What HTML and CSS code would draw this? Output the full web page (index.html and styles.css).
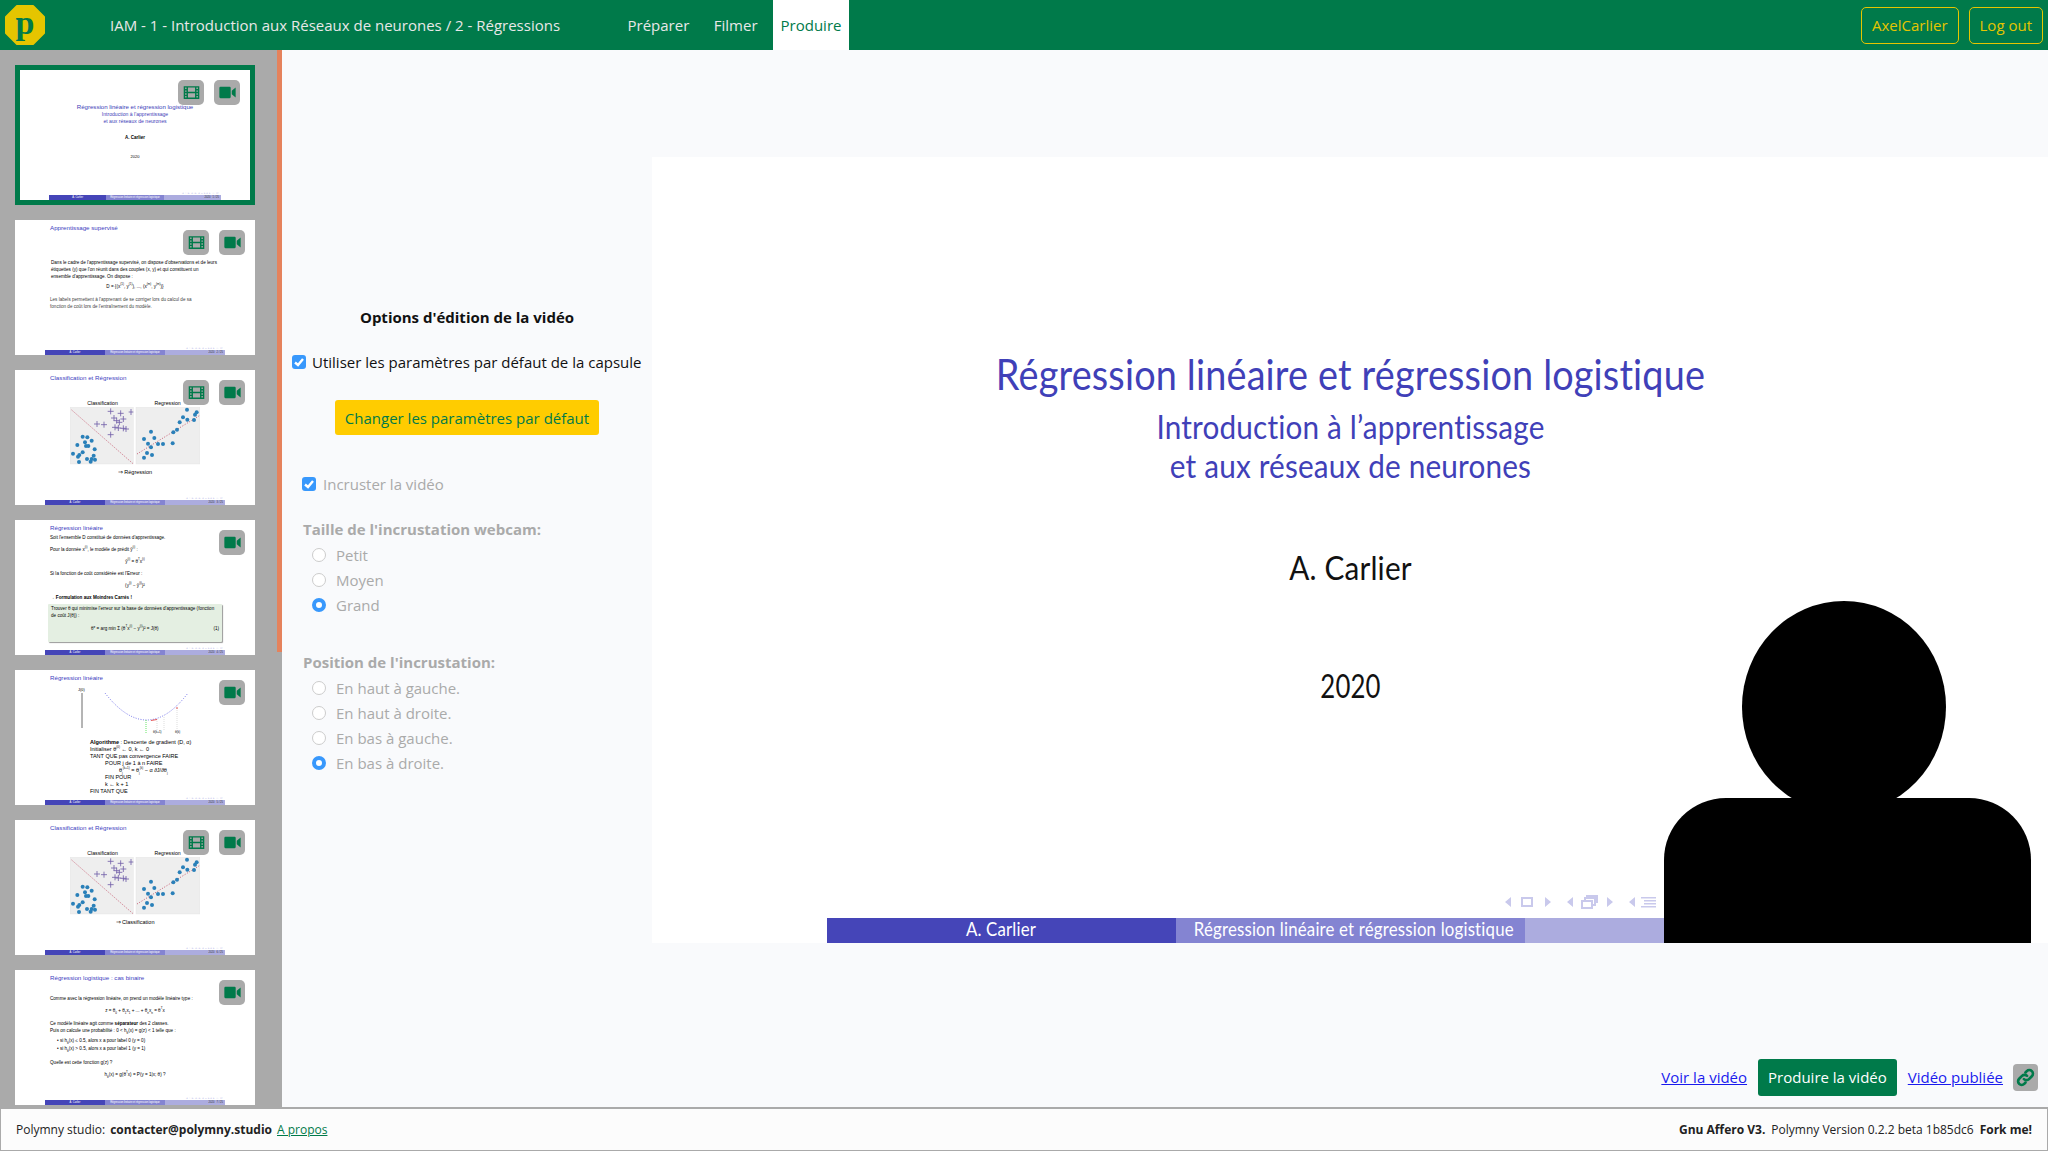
FILE: index.html
```html
<!DOCTYPE html>
<html>
<head>
    <meta charset="utf-8">
    <link rel="stylesheet" href="styles.css">
</head>
<body>
    <svg class="defs" width="0" height="0">
        <symbol id="film" viewBox="0 0 24 24">
            <path fill="currentColor" fill-rule="evenodd" d="M1 3h22v18H1zM3 5v2h2V5zM3 9v2h2V9zM3 13v2h2v-2zM3 17v2h2v-2zM19 5v2h2V5zM19 9v2h2V9zM19 13v2h2v-2zM19 17v2h2v-2zM7 5v6h10V5zM7 13v6h10v-6z"/>
        </symbol>
        <symbol id="camera" viewBox="0 0 24 24">
            <path fill="currentColor" d="M2 4h13a1.500 1.500 0 0 1 1.500 1.500v13A1.500 1.500 0 0 1 15 20H2a1.500 1.500 0 0 1-1.500-1.500v-13A1.500 1.500 0 0 1 2 4zM18 9.500 23.500 5v14L18 14.500z"/>
        </symbol>
        <symbol id="scatter" viewBox="0 0 390 172">
            <rect x="0" y="0" width="190" height="170" fill="#eee" stroke="#ddd"/>
            <rect x="198" y="0" width="192" height="170" fill="#eee" stroke="#ddd"/>
            <path d="M5 8 188 168M201 140 388 25" stroke="#b01030" stroke-width="2" stroke-dasharray="3 5" fill="none"/>
            <g fill="#2a80b9">
                <circle cx="38" cy="88" r="6"/><circle cx="52" cy="90" r="6"/><circle cx="65" cy="100" r="6"/>
                <circle cx="45" cy="105" r="6"/><circle cx="48" cy="116" r="6"/><circle cx="55" cy="116" r="6"/>
                <circle cx="22" cy="113" r="6"/><circle cx="74" cy="126" r="6"/><circle cx="38" cy="135" r="6"/>
                <circle cx="28" cy="143" r="6"/><circle cx="9" cy="139" r="6"/><circle cx="24" cy="148" r="6"/>
                <circle cx="71" cy="145" r="6"/><circle cx="51" cy="155" r="6"/><circle cx="65" cy="155" r="6"/>
                <circle cx="75" cy="157" r="6"/><circle cx="62" cy="163" r="6"/><circle cx="27" cy="164" r="6"/>
                <circle cx="351" cy="7" r="6"/><circle cx="380" cy="15" r="6"/><circle cx="375" cy="22" r="6"/>
                <circle cx="339" cy="30" r="6"/><circle cx="352" cy="37" r="6"/><circle cx="372" cy="38" r="6"/>
                <circle cx="329" cy="45" r="6"/><circle cx="321" cy="67" r="6"/><circle cx="310" cy="75" r="6"/>
                <circle cx="243" cy="73" r="6"/><circle cx="253" cy="92" r="6"/><circle cx="222" cy="95" r="6"/>
                <circle cx="234" cy="109" r="6"/><circle cx="264" cy="110" r="6"/><circle cx="279" cy="110" r="6"/>
                <circle cx="308" cy="108" r="6"/><circle cx="243" cy="120" r="6"/><circle cx="231" cy="137" r="6"/>
                <circle cx="246" cy="143" r="6"/><circle cx="222" cy="151" r="6"/>
            </g>
            <path stroke="#7260a8" stroke-width="2.500" fill="none" d="M113 12h18M122 3v18M143 18h18M152 9v18M176 14h14M183 5v18M123 32h18M132 23v18M151 35h18M160 26v18M131 40h18M140 31v18M139 45h18M148 36v18M72 50h18M81 41v18M93 52h18M102 43v18M126 60h18M135 51v18M136 62h18M145 53v18M151 63h18M160 54v18M159 65h18M168 56v18M113 82h18M122 73v18"/>
        </symbol>
    </svg>

    <header class="topbar">
        <svg class="logo" viewBox="0 0 40 40">
            <polygon points="12,1 28,1 39,12 39,28 28,39 12,39 1,28 1,12" fill="#e5c500" stroke="#e5c500" stroke-width="2" stroke-linejoin="round"/>
            <text x="20" y="29" text-anchor="middle" class="logo-letter">p</text>
        </svg>
        <span class="capsule-title">IAM - 1 - Introduction aux Réseaux de neurones / 2 - Régressions</span>
        <nav class="tabs">
            <a class="tab">Préparer</a>
            <a class="tab">Filmer</a>
            <a class="tab active">Produire</a>
        </nav>
        <div class="user-btns">
            <a class="outline-btn">AxelCarlier</a>
            <a class="outline-btn">Log out</a>
        </div>
    </header>

    <div class="workspace">
        <aside class="sidebar">
            <div class="thumbs">

                <div class="thumb selected">
                    <div class="badges">
                        <span class="badge"><svg><use href="#film"/></svg></span>
                        <span class="badge"><svg><use href="#camera"/></svg></span>
                    </div>
                    <div class="mini mini-title-slide">
                        <div class="mt-main">Régression linéaire et régression logistique</div>
                        <div class="mt-sub">Introduction à l'apprentissage<br>et aux réseaux de neurones</div>
                        <div class="mt-author">A. Carlier</div>
                        <div class="mt-year">2020</div>
                        <div class="mini-nav">◂ □ ▸ ◂ ▫ ▸ ◂ ≡ ▸ ◂ ▸ ∽ ∅</div>
                        <div class="mini-bar"><span>A. Carlier</span><span>Régression linéaire et régression logistique</span><span>2020 &nbsp; 1 / 25</span></div>
                    </div>
                </div>

                <div class="thumb">
                    <div class="badges">
                        <span class="badge"><svg><use href="#film"/></svg></span>
                        <span class="badge"><svg><use href="#camera"/></svg></span>
                    </div>
                    <div class="mini">
                        <div class="mini-head">Apprentissage supervisé</div>
                        <p class="mp push">Dans le cadre de l'apprentissage supervisé, on dispose d'observations et de leurs étiquettes (y) que l'on réunit dans des couples (x, y) et qui constituent un ensemble d'apprentissage. On dispose :</p>
                        <p class="mc">D = {(x<sup>(1)</sup>, y<sup>(1)</sup>), ..., (x<sup>(m)</sup>, y<sup>(m)</sup>)}</p>
                        <p class="mp light">Les labels permettent à l'apprenant de se corriger lors du calcul de sa fonction de coût lors de l'entraînement du modèle.</p>
                        <div class="mini-nav">◂ □ ▸ ◂ ▫ ▸ ◂ ≡ ▸ ◂ ▸ ∽ ∅</div>
                        <div class="mini-bar"><span>A. Carlier</span><span>Régression linéaire et régression logistique</span><span>2020 &nbsp; 2 / 25</span></div>
                    </div>
                </div>

                <div class="thumb">
                    <div class="badges">
                        <span class="badge"><svg><use href="#film"/></svg></span>
                        <span class="badge"><svg><use href="#camera"/></svg></span>
                    </div>
                    <div class="mini">
                        <div class="mini-head">Classification et Régression</div>
                        <div class="plot-labels"><span>Classification</span><span>Regression</span></div>
                        <svg class="plot"><use href="#scatter"/></svg>
                        <p class="mc caption">⇒ Régression</p>
                        <div class="mini-nav">◂ □ ▸ ◂ ▫ ▸ ◂ ≡ ▸ ◂ ▸ ∽ ∅</div>
                        <div class="mini-bar"><span>A. Carlier</span><span>Régression linéaire et régression logistique</span><span>2020 &nbsp; 3 / 25</span></div>
                    </div>
                </div>

                <div class="thumb">
                    <div class="badges">
                        <span class="badge"><svg><use href="#camera"/></svg></span>
                    </div>
                    <div class="mini">
                        <div class="mini-head">Régression linéaire</div>
                        <p class="mp first">Soit l'ensemble D constitué de données d'apprentissage.</p>
                        <p class="mp">Pour la donnée x<sup>(i)</sup>, le modèle de prédit ŷ<sup>(i)</sup> :</p>
                        <p class="mc">ŷ<sup>(i)</sup> = θ<sup>T</sup>x<sup>(i)</sup></p>
                        <p class="mp">Si la fonction de coût considérée est l'Erreur :</p>
                        <p class="mc">(y<sup>(i)</sup> − ŷ<sup>(i)</sup>)²</p>
                        <p class="mp last"><b>→ Formulation aux Moindres Carrés !</b></p>
                        <div class="mini-block">
                            Trouver θ qui minimise l'erreur sur la base de données d'apprentissage (fonction de coût J(θ)) :
                            <div class="formula"><span>θ* = arg min Σ (θ<sup>T</sup>x<sup>(i)</sup> − y<sup>(i)</sup>)² = J(θ)</span><span>(1)</span></div>
                        </div>
                        <div class="mini-nav">◂ □ ▸ ◂ ▫ ▸ ◂ ≡ ▸ ◂ ▸ ∽ ∅</div>
                        <div class="mini-bar"><span>A. Carlier</span><span>Régression linéaire et régression logistique</span><span>2020 &nbsp; 4 / 25</span></div>
                    </div>
                </div>

                <div class="thumb">
                    <div class="badges">
                        <span class="badge"><svg><use href="#camera"/></svg></span>
                    </div>
                    <div class="mini">
                        <div class="mini-head">Régression linéaire</div>
                        <svg class="curve" viewBox="0 0 150 50">
                            <text x="33" y="7" class="curve-label">J(θ)</text>
                            <path d="M37 9V44" stroke="#444" stroke-width="0.800"/>
                            <path d="M60 9Q102 63 143 9" stroke="#3a3ae0" stroke-width="0.700" stroke-dasharray="1 1.500" fill="none"/>
                            <path d="M112 35V46M119 33V46M132 24V46" stroke="#bbb" stroke-width="0.500" stroke-dasharray="1 1"/>
                            <path d="M101 36V50" stroke="#40e040" stroke-width="0.800" stroke-dasharray="1 1"/>
                            <path d="M106 36.500 112 35.500M132 23V25" stroke="#e03030" stroke-width="0.800"/>
                            <text x="108" y="49" class="curve-label small">θ(k+1)</text>
                            <text x="130" y="49" class="curve-label small">θ(k)</text>
                        </svg>
                        <div class="algo">
                            <b>Algorithme</b> : Descente de gradient (D, α)<br>
                            Initialiser θ<sup>(0)</sup> ← 0, k ← 0<br>
                            TANT QUE pas convergence FAIRE<br>
                            <span class="indent">POUR j de 1 à n FAIRE</span><br>
                            <span class="indent2">θ<sub>j</sub><sup>(k+1)</sup> = θ<sub>j</sub><sup>(k)</sup> − α ∂J/∂θ<sub>j</sub></span><br>
                            <span class="indent">FIN POUR</span><br>
                            <span class="indent">k ← k + 1</span><br>
                            FIN TANT QUE
                        </div>
                        <div class="mini-nav">◂ □ ▸ ◂ ▫ ▸ ◂ ≡ ▸ ◂ ▸ ∽ ∅</div>
                        <div class="mini-bar"><span>A. Carlier</span><span>Régression linéaire et régression logistique</span><span>2020 &nbsp; 5 / 25</span></div>
                    </div>
                </div>

                <div class="thumb">
                    <div class="badges">
                        <span class="badge"><svg><use href="#film"/></svg></span>
                        <span class="badge"><svg><use href="#camera"/></svg></span>
                    </div>
                    <div class="mini">
                        <div class="mini-head">Classification et Régression</div>
                        <div class="plot-labels"><span>Classification</span><span>Regression</span></div>
                        <svg class="plot"><use href="#scatter"/></svg>
                        <p class="mc caption">⇒ Classification</p>
                        <div class="mini-nav">◂ □ ▸ ◂ ▫ ▸ ◂ ≡ ▸ ◂ ▸ ∽ ∅</div>
                        <div class="mini-bar"><span>A. Carlier</span><span>Régression linéaire et régression logistique</span><span>2020 &nbsp; 6 / 25</span></div>
                    </div>
                </div>

                <div class="thumb">
                    <div class="badges">
                        <span class="badge"><svg><use href="#camera"/></svg></span>
                    </div>
                    <div class="mini">
                        <div class="mini-head">Régression logistique : cas binaire</div>
                        <p class="mp push-sm">Comme avec la régression linéaire, on prend un modèle linéaire type :</p>
                        <p class="mc">z = θ<sub>0</sub> + θ<sub>1</sub>x<sub>1</sub> + ... + θ<sub>n</sub>x<sub>n</sub> = θ<sup>T</sup>x</p>
                        <p class="mp tight">Ce modèle linéaire agit comme <b>séparateur</b> des 2 classes.<br>Puis on calcule une probabilité : 0 &lt; h<sub>θ</sub>(x) = g(z) &lt; 1 telle que :</p>
                        <p class="mp bullets">• si h<sub>θ</sub>(x) ≤ 0.5, alors x a pour label 0 (y = 0)<br>• si h<sub>θ</sub>(x) &gt; 0.5, alors x a pour label 1 (y = 1)</p>
                        <p class="mp">Quelle est cette fonction g(z) ?</p>
                        <p class="mc">h<sub>θ</sub>(x) = g(θ<sup>T</sup>x) = P(y = 1|x; θ) ?</p>
                        <div class="mini-nav">◂ □ ▸ ◂ ▫ ▸ ◂ ≡ ▸ ◂ ▸ ∽ ∅</div>
                        <div class="mini-bar"><span>A. Carlier</span><span>Régression linéaire et régression logistique</span><span>2020 &nbsp; 7 / 25</span></div>
                    </div>
                </div>

            </div>
            <div class="scrolltrack"><div class="scrollthumb"></div></div>
        </aside>

        <main class="main">
            <section class="options">
                <h4 class="options-title">Options d'édition de la vidéo</h4>
                <div class="check-row">
                    <span class="check"><svg viewBox="0 0 14 14"><path d="M3 7.500 6 10l5-6" fill="none" stroke="#fff" stroke-width="2.400"/></svg></span>
                    <span>Utiliser les paramètres par défaut de la capsule</span>
                </div>
                <a class="yellow-btn">Changer les paramètres par défaut</a>
                <div class="disabled-group">
                    <div class="check-row inner">
                        <span class="check"><svg viewBox="0 0 14 14"><path d="M3 7.500 6 10l5-6" fill="none" stroke="#fff" stroke-width="2.400"/></svg></span>
                        <span>Incruster la vidéo</span>
                    </div>
                    <div class="group-label">Taille de l'incrustation webcam:</div>
                    <div class="radio-row"><span class="radio"></span>Petit</div>
                    <div class="radio-row"><span class="radio"></span>Moyen</div>
                    <div class="radio-row"><span class="radio on"></span>Grand</div>
                    <div class="group-label second">Position de l'incrustation:</div>
                    <div class="radio-row"><span class="radio"></span>En haut à gauche.</div>
                    <div class="radio-row"><span class="radio"></span>En haut à droite.</div>
                    <div class="radio-row"><span class="radio"></span>En bas à gauche.</div>
                    <div class="radio-row"><span class="radio on"></span>En bas à droite.</div>
                </div>
            </section>

            <section class="stage">
                <div class="slide-wrap">
                    <div class="slide">
                        <div class="beamer">
                            <div class="s-title">Régression linéaire et régression logistique</div>
                            <div class="s-sub">Introduction à l’apprentissage<br>et aux réseaux de neurones</div>
                            <div class="s-author">A. Carlier</div>
                            <div class="s-year">2020</div>
                            <svg class="s-nav" viewBox="0 0 154 14">
                                <g fill="#c9c9ec">
                                    <path d="M0 7 6 2v10zM40 2v10l6-5zM62 7l6-5v10zM102 2v10l6-5zM124 7l6-5v10z"/>
                                    <path d="M136 2h15v1.500h-15zM139 5h12v1.500h-12zM139 8h12v1.500h-12zM136 11h15v1.500h-15z"/>
                                </g>
                                <g fill="none" stroke="#c9c9ec" stroke-width="2">
                                    <rect x="17" y="3" width="10" height="8"/>
                                    <path d="M77 6h10v7H77zM80 6V3h10v7h-3M82 3V1h10v6h-2"/>
                                </g>
                            </svg>
                            <div class="s-bar">
                                <span><span class="squeeze">A. Carlier</span></span>
                                <span><span class="squeeze">Régression linéaire et régression logistique</span></span>
                                <span></span>
                            </div>
                        </div>
                        <div class="webcam">
                            <div class="head"></div>
                            <div class="shoulders"></div>
                        </div>
                    </div>
                </div>
                <div class="actions">
                    <a class="link">Voir la vidéo</a>
                    <a class="green-btn">Produire la vidéo</a>
                    <a class="link">Vidéo publiée</a>
                    <a class="copy-btn">
                        <svg viewBox="0 0 24 24" fill="none" stroke="#007a4a" stroke-width="3.400" stroke-linecap="round"><path d="M10 14a4.500 4.500 0 0 0 6.400 0l3.600-3.600A4.500 4.500 0 0 0 13.600 4L12 5.600"/><path d="M14 10a4.500 4.500 0 0 0-6.400 0L4 13.600A4.500 4.500 0 0 0 10.400 20L12 18.400"/></svg>
                    </a>
                </div>
            </section>
        </main>
    </div>

    <footer class="footer">
        <div class="foot-left">
            <span>Polymny studio:</span>
            <b>contacter@polymny.studio</b>
            <a class="about">A propos</a>
        </div>
        <div class="foot-right">
            <b>Gnu Affero V3.</b>
            <span>Polymny Version 0.2.2 beta 1b85dc6</span>
            <b>Fork me!</b>
        </div>
    </footer>
</body>
</html>
```
FILE: styles.css
```css
*
{
    box-sizing: border-box;
}
html, body
{
    height: 100%;
}
body
{
    margin: 0;
    display: flex;
    flex-direction: column;
    overflow: hidden;
    font-family: "Open Sans", sans-serif;
    font-size: 15px;
    color: #111;
    background-color: #f9fafc;
}
.defs
{
    position: absolute;
}

/* top bar */
.topbar
{
    height: 50px;
    flex: none;
    display: flex;
    align-items: center;
    padding-left: 5px;
    background-color: #007a4a;
    color: #e8e8e8;
}
.logo
{
    width: 40px;
    height: 40px;
    flex: none;
}
.logo-letter
{
    font-family: "Liberation Serif", serif;
    font-weight: bold;
    font-size: 34px;
    fill: #007a4a;
}
.capsule-title
{
    margin-left: 65px;
    width: 510px;
    white-space: nowrap;
}
.tabs
{
    display: flex;
    height: 50px;
}
.tab
{
    display: flex;
    align-items: center;
    padding: 0 7.500px;
    margin-right: 9.500px;
}
.tab.active
{
    margin-right: 0;
    margin-left: -1.500px;
    background-color: #fff;
    color: #007a4a;
}
.user-btns
{
    margin-left: auto;
    margin-right: 5px;
    display: flex;
    gap: 10px;
}
.outline-btn
{
    height: 37px;
    padding: 0 10px;
    display: flex;
    align-items: center;
    border: 1px solid #e5c500;
    border-radius: 5px;
    color: #e5c500;
}

/* layout */
.workspace
{
    flex: 1;
    min-height: 0;
    display: flex;
}
.sidebar
{
    width: 282px;
    flex: none;
    display: flex;
    background-color: #aaa;
    overflow: hidden;
}
.thumbs
{
    width: 277px;
    padding: 15px 0 0 15px;
    display: flex;
    flex-direction: column;
    gap: 15px;
}
.scrolltrack
{
    width: 5px;
}
.scrollthumb
{
    height: 602px;
    background-color: #e5825c;
}

/* thumbnails */
.thumb
{
    position: relative;
    width: 240px;
    height: 135px;
    flex: none;
    background-color: #fff;
    display: flex;
    justify-content: center;
}
.thumb.selected
{
    height: 140px;
    border: 5px solid #007a4a;
}
.badges
{
    position: absolute;
    top: 10px;
    right: 10px;
    display: flex;
    gap: 10px;
}
.badge
{
    width: 26px;
    height: 25px;
    border-radius: 5px;
    background-color: #aaa;
    color: #007a4a;
    display: flex;
    align-items: center;
    justify-content: center;
}
.badge svg
{
    width: 17px;
    height: 17px;
}
.mini
{
    width: 180px;
    height: 100%;
    display: flex;
    flex-direction: column;
    font-family: "Liberation Sans", sans-serif;
    font-size: 4.600px;
    line-height: 5.500px;
    color: #000;
}
.mini sup, .mini sub
{
    font-size: 3px;
    line-height: 0;
}
.mini-head
{
    margin: 4px 0 0 5px;
    font-size: 6.200px;
    line-height: 7px;
    color: #4040c0;
}
.mp
{
    margin: 0 5px 6.500px;
    white-space: normal;
}
.mp.first
{
    margin-top: 4px;
}
.mp.last
{
    margin-bottom: 3px;
}
.mp.push
{
    margin: 27.500px 8px 4.500px 6px;
    line-height: 7px;
}
.mp.push-sm
{
    margin-top: 15px;
}
.mp.light
{
    color: #444;
    line-height: 7px;
    margin-right: 30px;
}
.mp.tight
{
    line-height: 7px;
    margin-bottom: 2.500px;
}
.mp.bullets
{
    margin: 0 5px 7px 12px;
    line-height: 8px;
}
.mc
{
    margin: 0 0 6.500px;
    text-align: center;
}
.caption
{
    margin-top: 5px;
    font-size: 5.500px;
}
.plot-labels
{
    margin: 20px 0 0 24px;
    width: 130px;
    display: flex;
    justify-content: space-around;
    font-size: 5.200px;
}
.plot
{
    width: 130px;
    height: 58px;
    flex: none;
    margin-left: 25px;
}
.mini-block
{
    margin-left: 3px;
    padding: 1px 3px;
    height: 38px;
    width: 174px;
    flex: none;
    border-radius: 1px;
    background-color: #e4efe2;
    box-shadow: 1px 1px 1px #999;
    line-height: 7px;
}
.formula
{
    margin-top: 6px;
    padding-left: 40px;
    display: flex;
    justify-content: space-between;
}
.curve
{
    width: 150px;
    height: 50px;
    flex: none;
    margin-top: 3px;
}
.curve-label
{
    font-size: 4px;
}
.curve-label.small
{
    font-size: 3px;
}
.algo
{
    margin: 5px 0 0 45px;
    font-size: 5.500px;
    line-height: 7px;
    white-space: nowrap;
}
.indent
{
    margin-left: 15px;
}
.indent2
{
    margin-left: 29px;
}
.mini-nav
{
    margin-top: auto;
    text-align: right;
    padding-right: 2px;
    color: #c9c9ec;
    font-size: 3px;
    line-height: 4px;
    white-space: nowrap;
}
.mini-bar
{
    height: 5px;
    flex: none;
    display: grid;
    grid-template-columns: repeat(3, minmax(0, 1fr));
    text-align: center;
    color: #fff;
    font-size: 2.600px;
    line-height: 5px;
    white-space: nowrap;
    overflow: hidden;
}
.mini-bar span:nth-child(1)
{
    background-color: #4545b8;
}
.mini-bar span:nth-child(2)
{
    background-color: #8484d2;
}
.mini-bar span:nth-child(3)
{
    background-color: #acacdf;
    color: #333;
    text-align: right;
    padding-right: 2px;
}
.mini-title-slide
{
    width: 172px;
    text-align: center;
}
.mt-main
{
    margin-top: 32.500px;
    font-size: 6.100px;
    line-height: 7px;
    color: #4040b8;
}
.mt-sub
{
    margin-top: 1px;
    font-size: 5.100px;
    line-height: 7px;
    color: #4040b8;
}
.mt-author
{
    margin-top: 10.500px;
    font-size: 4.500px;
    line-height: 6px;
    font-weight: bold;
}
.mt-year
{
    margin-top: 13px;
    font-size: 4px;
    line-height: 6px;
}

/* main */
.main
{
    flex: 1;
    min-width: 0;
    display: flex;
}
.options
{
    width: 370px;
    flex: none;
    padding-top: 257px;
    display: flex;
    flex-direction: column;
    align-items: center;
}
.options-title
{
    margin: 0 0 24px;
    font-size: 15px;
    line-height: 20px;
    font-weight: bold;
}
.check-row
{
    width: 100%;
    padding-left: 10px;
    display: flex;
    align-items: center;
    gap: 6px;
    line-height: 22px;
}
.check
{
    width: 14px;
    height: 14px;
    flex: none;
    border-radius: 3px;
    background-color: #3898fc;
    display: flex;
}
.yellow-btn
{
    margin-top: 27px;
    height: 35px;
    width: 264px;
    border-radius: 3px;
    display: flex;
    align-items: center;
    justify-content: center;
    background-color: #ffcc00;
    color: #007a4a;
}
.disabled-group
{
    width: 100%;
    margin-top: 38px;
    padding-left: 21px;
    color: #aaa;
}
.check-row.inner
{
    margin-left: -1px;
    padding-left: 0;
    gap: 7px;
}
.group-label
{
    margin: 24px 0 3px;
    font-weight: bold;
    line-height: 20px;
}
.group-label.second
{
    margin-top: 35px;
}
.radio-row
{
    height: 25px;
    padding-left: 9px;
    display: flex;
    align-items: center;
    gap: 10px;
}
.radio
{
    width: 14px;
    height: 14px;
    flex: none;
    border: 1px solid #ccc;
    border-radius: 50%;
    background-color: #fff;
}
.radio.on
{
    border: 4.500px solid #3898fc;
}

/* slide */
.stage
{
    flex: 1;
    min-width: 0;
    display: flex;
    flex-direction: column;
}
.slide-wrap
{
    flex: 1;
    display: flex;
    align-items: center;
}
.slide
{
    position: relative;
    width: 100%;
    height: 786px;
    background-color: #fff;
    display: flex;
    justify-content: center;
}
.beamer
{
    width: 1047px;
    display: flex;
    flex-direction: column;
    text-align: center;
    font-family: Lato, sans-serif;
    letter-spacing: 0.2px;
}
.s-title
{
    margin-top: 189px;
    font-size: 42px;
    line-height: 56px;
    color: #4040b8;
    transform: scaleX(0.9);
}
.s-sub
{
    margin-top: 5px;
    font-size: 33px;
    line-height: 39px;
    color: #4040b8;
    transform: scaleX(0.9);
}
.s-author
{
    margin-top: 62px;
    font-size: 33px;
    line-height: 40px;
    color: #111;
    transform: scaleX(0.9);
}
.s-year
{
    margin-top: 78px;
    font-size: 33px;
    line-height: 40px;
    color: #111;
    transform: scaleX(0.78);
}
.s-nav
{
    width: 154px;
    height: 14px;
    margin: auto 0 9px 678px;
}
.s-bar
{
    height: 25px;
    flex: none;
    display: grid;
    grid-template-columns: repeat(3, minmax(0, 1fr));
    font-size: 18.700px;
    line-height: 23px;
    color: #fff;
    white-space: nowrap;
}
.s-bar > span:nth-child(1)
{
    background-color: #4545b8;
}
.s-bar > span:nth-child(2)
{
    background-color: #8484d2;
}
.s-bar > span:nth-child(3)
{
    background-color: #acacdf;
}
.squeeze
{
    display: inline-block;
    transform: scaleX(0.9);
}
.webcam
{
    position: absolute;
    right: 17px;
    bottom: 0;
    width: 367px;
    height: 342px;
}
.head
{
    position: absolute;
    top: 0;
    left: 78px;
    width: 204px;
    height: 212px;
    border-radius: 50%;
    background-color: #000;
}
.shoulders
{
    position: absolute;
    left: 0;
    right: 0;
    bottom: 0;
    height: 145px;
    border-radius: 62px 62px 0 0;
    background-color: #000;
}

/* bottom actions */
.actions
{
    height: 58px;
    flex: none;
    display: flex;
    align-items: center;
    justify-content: flex-end;
    padding: 0 10px 2px 0;
    gap: 11px;
}
.link
{
    color: #1a1aee;
    text-decoration: underline;
}
.link + .copy-btn
{
    margin-left: -1px;
}
.green-btn
{
    height: 37px;
    padding: 0 10px;
    border-radius: 3px;
    display: flex;
    align-items: center;
    background-color: #007a4a;
    color: #fff;
}
.copy-btn
{
    width: 25px;
    height: 27px;
    border-radius: 4px;
    background-color: #aaa;
    display: flex;
    align-items: center;
    justify-content: center;
}
.copy-btn svg
{
    width: 19px;
    height: 19px;
}

/* footer */
.footer
{
    height: 44px;
    flex: none;
    display: flex;
    align-items: center;
    justify-content: space-between;
    padding: 0 15px;
    border: 1px solid #aaa;
    border-top-width: 2px;
    background-color: #fcfcfc;
    font-size: 12px;
    color: #222;
}
.foot-left, .foot-right
{
    display: flex;
    gap: 5px;
}
.foot-right
{
    gap: 6px;
}
.about
{
    color: #007a4a;
    text-decoration: underline;
}
```
